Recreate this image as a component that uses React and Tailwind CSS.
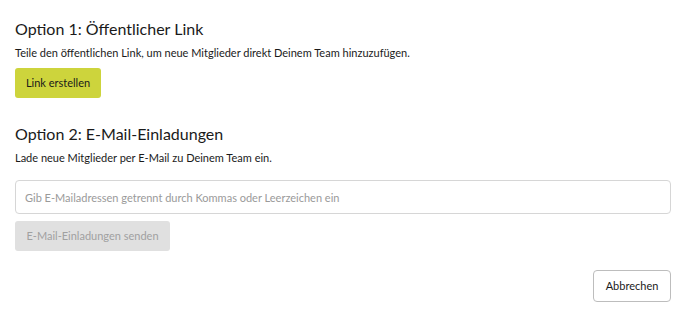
import React from 'react';

const App = () => {
  return (
    <div className="w-[688px] h-[318px] bg-white px-[15px] pt-[18px] text-[#1a1a1a] flex flex-col" style={{ fontFamily: 'Lato, "Noto Sans", sans-serif' }}>
      {/* Option 1 */}
      <h2 className="text-[16px] leading-[22px] font-normal">Option 1: Öffentlicher Link</h2>
      <p className="mt-[5px] text-[11px] leading-[16px]">Teile den öffentlichen Link, um neue Mitglieder direkt Deinem Team hinzuzufügen.</p>
      <div className="mt-[7px]">
        <button className="h-[30px] w-[86px] rounded-[3px] bg-[#cdd43c] text-[11px] text-[#1a1a1a]">Link erstellen</button>
      </div>

      {/* Option 2 */}
      <h2 className="mt-[25px] text-[16px] leading-[22px] font-normal">Option 2: E-Mail-Einladungen</h2>
      <p className="mt-[5px] text-[11px] leading-[16px]">Lade neue Mitglieder per E-Mail zu Deinem Team ein.</p>
      <input
        className="mt-[14px] h-[34px] w-[656px] rounded-[4px] border border-[#d6d6d6] px-[9px] text-[11px] placeholder:text-[#9a9a9a] outline-none"
        placeholder="Gib E-Mailadressen getrennt durch Kommas oder Leerzeichen ein"
      />
      <div className="mt-[7px]">
        <button disabled className="h-[30px] w-[155px] rounded-[3px] bg-[#e0e0e0] text-[11px] text-[#a0a0a0]">E-Mail-Einladungen senden</button>
      </div>

      <div className="mt-[19px] flex justify-end w-[656px]">
        <button className="h-[32px] w-[78px] rounded-[4px] border border-[#bdbdbd] bg-white text-[11px] text-[#1a1a1a]">Abbrechen</button>
      </div>
    </div>
  );
};

export default App;
